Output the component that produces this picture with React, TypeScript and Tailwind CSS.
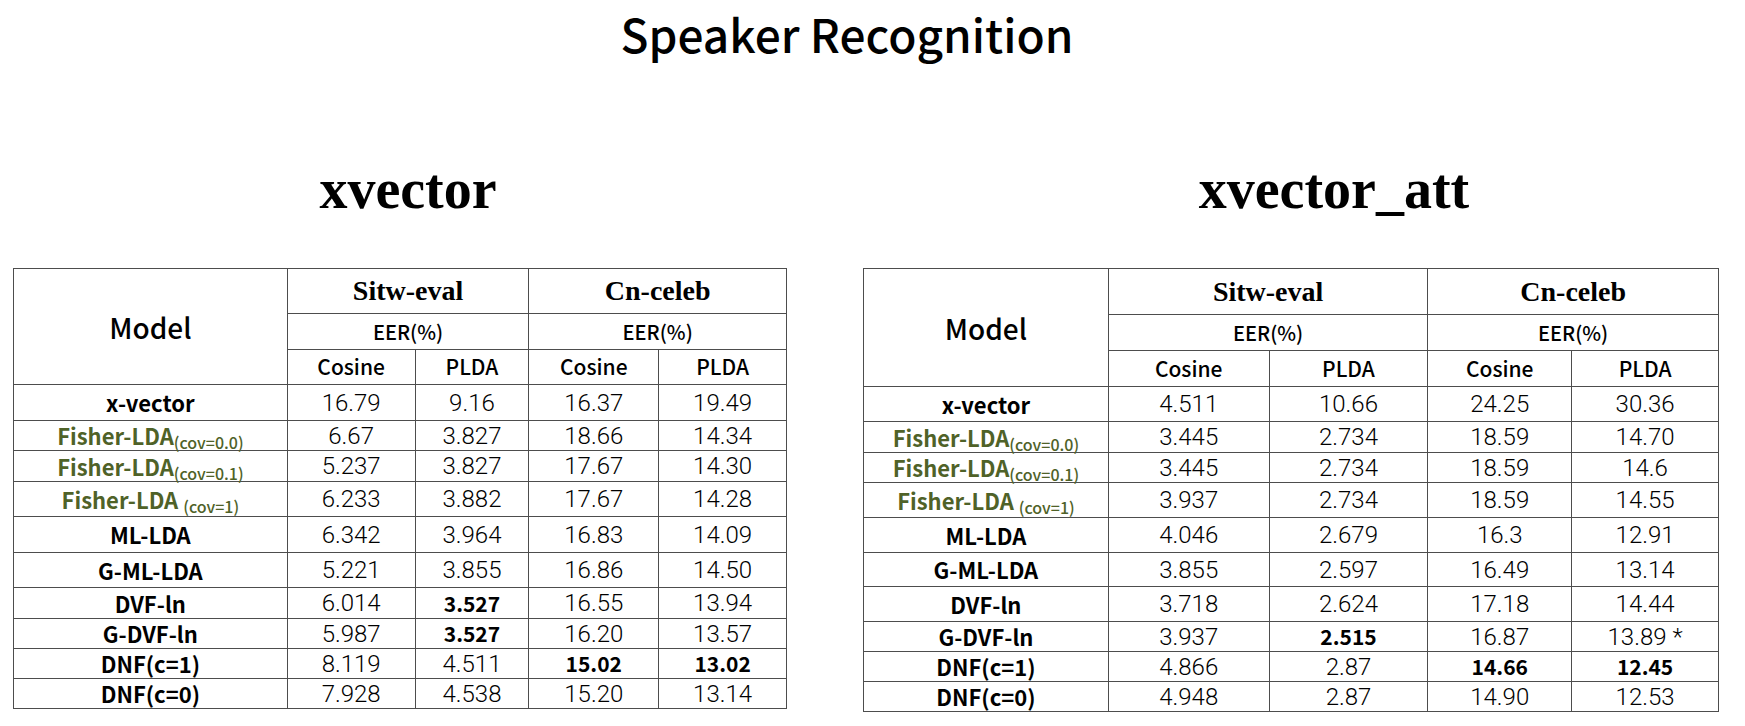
import React from "react";

type Cell = { v: string; b?: boolean };
type Row = { label: React.ReactNode; h: number; cells: Cell[] };

function Label({ name }: { name: string }) {
  return (
    <span className="font-['Noto_Sans_CJK_SC','Noto_Sans',sans-serif] font-semibold text-[22px] text-black whitespace-nowrap">
      {name}
    </span>
  );
}

function Fisher({ sub, gap }: { sub: string; gap?: boolean }) {
  return (
    <span className="font-['Noto_Sans_CJK_SC','Noto_Sans',sans-serif] font-semibold text-[22px] text-[#4f6228] whitespace-nowrap">
      Fisher-LDA
      {gap ? " " : ""}
      <span className="text-[16px] font-medium relative top-[4px]">{sub}</span>
    </span>
  );
}

function Num({ c }: { c: Cell }) {
  return (
    <span
      className={
        c.b
          ? "font-['Noto_Sans_CJK_SC','Noto_Sans',sans-serif] font-bold text-[21px] text-black whitespace-nowrap"
          : "font-['Roboto',sans-serif] font-light text-[24px] text-black whitespace-nowrap"
      }
    >
      {c.v}
    </span>
  );
}

function DataTable({
  widths,
  headH,
  rows,
}: {
  widths: number[];
  headH: number[];
  rows: Row[];
}) {
  const bd = "border border-[#4d4d4d]";
  return (
    <table className="border-collapse table-fixed border border-[#333333]">
      <colgroup>
        {widths.map((w, i) => (
          <col key={i} style={{ width: w }} />
        ))}
      </colgroup>
      <tbody>
        <tr style={{ height: headH[0] }}>
          <td rowSpan={3} className={`${bd} text-center p-0`}>
            <span className="font-['Noto_Sans_CJK_SC','Noto_Sans',sans-serif] font-medium text-[28px] text-black">
              Model
            </span>
          </td>
          <td colSpan={2} className={`${bd} text-center p-0`}>
            <span className="font-['Liberation_Serif',serif] font-bold text-[28px] text-black">
              Sitw-eval
            </span>
          </td>
          <td colSpan={2} className={`${bd} text-center p-0`}>
            <span className="font-['Liberation_Serif',serif] font-bold text-[28px] text-black">
              Cn-celeb
            </span>
          </td>
        </tr>
        <tr style={{ height: headH[1] }}>
          <td colSpan={2} className={`${bd} text-center p-0`}>
            <span className="font-['Noto_Sans_CJK_SC','Noto_Sans',sans-serif] font-medium text-[20px] text-black">
              EER(%)
            </span>
          </td>
          <td colSpan={2} className={`${bd} text-center p-0`}>
            <span className="font-['Noto_Sans_CJK_SC','Noto_Sans',sans-serif] font-medium text-[20px] text-black">
              EER(%)
            </span>
          </td>
        </tr>
        <tr style={{ height: headH[2] }}>
          {["Cosine", "PLDA", "Cosine", "PLDA"].map((t, i) => (
            <td key={i} className={`${bd} text-center p-0`}>
              <span className="font-['Noto_Sans_CJK_SC','Noto_Sans',sans-serif] font-medium text-[21px] text-black">
                {t}
              </span>
            </td>
          ))}
        </tr>
        {rows.map((r, i) => (
          <tr key={i} style={{ height: r.h }}>
            <td className={`${bd} text-center p-0 leading-none`}>{r.label}</td>
            {r.cells.map((c, j) => (
              <td key={j} className={`${bd} text-center p-0 leading-none`}>
                <Num c={c} />
              </td>
            ))}
          </tr>
        ))}
      </tbody>
    </table>
  );
}

const n = (v: string): Cell => ({ v });
const b = (v: string): Cell => ({ v, b: true });

const leftRows: Row[] = [
  { label: <Label name="x-vector" />, h: 36, cells: [n("16.79"), n("9.16"), n("16.37"), n("19.49")] },
  { label: <Fisher sub="(cov=0.0)" />, h: 30, cells: [n("6.67"), n("3.827"), n("18.66"), n("14.34")] },
  { label: <Fisher sub="(cov=0.1)" />, h: 31, cells: [n("5.237"), n("3.827"), n("17.67"), n("14.30")] },
  { label: <Fisher sub="(cov=1)" gap />, h: 35, cells: [n("6.233"), n("3.882"), n("17.67"), n("14.28")] },
  { label: <Label name="ML-LDA" />, h: 36, cells: [n("6.342"), n("3.964"), n("16.83"), n("14.09")] },
  { label: <Label name="G-ML-LDA" />, h: 35, cells: [n("5.221"), n("3.855"), n("16.86"), n("14.50")] },
  { label: <Label name="DVF-ln" />, h: 31, cells: [n("6.014"), b("3.527"), n("16.55"), n("13.94")] },
  { label: <Label name="G-DVF-ln" />, h: 30, cells: [n("5.987"), b("3.527"), n("16.20"), n("13.57")] },
  { label: <Label name="DNF(c=1)" />, h: 30, cells: [n("8.119"), n("4.511"), b("15.02"), b("13.02")] },
  { label: <Label name="DNF(c=0)" />, h: 30, cells: [n("7.928"), n("4.538"), n("15.20"), n("13.14")] },
];

const rightRows: Row[] = [
  { label: <Label name="x-vector" />, h: 35, cells: [n("4.511"), n("10.66"), n("24.25"), n("30.36")] },
  { label: <Fisher sub="(cov=0.0)" />, h: 31, cells: [n("3.445"), n("2.734"), n("18.59"), n("14.70")] },
  { label: <Fisher sub="(cov=0.1)" />, h: 30, cells: [n("3.445"), n("2.734"), n("18.59"), n("14.6")] },
  { label: <Fisher sub="(cov=1)" gap />, h: 35, cells: [n("3.937"), n("2.734"), n("18.59"), n("14.55")] },
  { label: <Label name="ML-LDA" />, h: 35, cells: [n("4.046"), n("2.679"), n("16.3"), n("12.91")] },
  { label: <Label name="G-ML-LDA" />, h: 34, cells: [n("3.855"), n("2.597"), n("16.49"), n("13.14")] },
  { label: <Label name="DVF-ln" />, h: 35, cells: [n("3.718"), n("2.624"), n("17.18"), n("14.44")] },
  { label: <Label name="G-DVF-ln" />, h: 30, cells: [n("3.937"), b("2.515"), n("16.87"), n("13.89 *")] },
  { label: <Label name="DNF(c=1)" />, h: 30, cells: [n("4.866"), n("2.87"), b("14.66"), b("12.45")] },
  { label: <Label name="DNF(c=0)" />, h: 30, cells: [n("4.948"), n("2.87"), n("14.90"), n("12.53")] },
];

export default function App() {
  return (
    <div className="w-[1745px] h-[726px] bg-white flex flex-col overflow-hidden">
      <div className="pt-[6px] pr-[51px] text-center">
        <h1 className="font-['Noto_Sans_CJK_SC','Noto_Sans',sans-serif] font-medium text-[46px] leading-[54px] text-black">
          Speaker Recognition
        </h1>
      </div>
      <div className="flex pl-[13px] gap-[76px] mt-[97px]">
        <div className="w-[774px] flex flex-col">
          <div className="pl-[16px] text-center font-['Liberation_Serif',serif] font-bold text-[56px] leading-[64px] text-black">
            xvector
          </div>
          <div className="mt-[47px]">
            <DataTable widths={[274, 128, 114, 130, 128]} headH={[45, 36, 35]} rows={leftRows} />
          </div>
        </div>
        <div className="w-[856px] flex flex-col">
          <div className="pl-[86px] text-center font-['Liberation_Serif',serif] font-bold text-[56px] leading-[64px] text-black">
            xvector_att
          </div>
          <div className="mt-[47px]">
            <DataTable widths={[245, 161, 159, 144, 147]} headH={[46, 36, 36]} rows={rightRows} />
          </div>
        </div>
      </div>
    </div>
  );
}
